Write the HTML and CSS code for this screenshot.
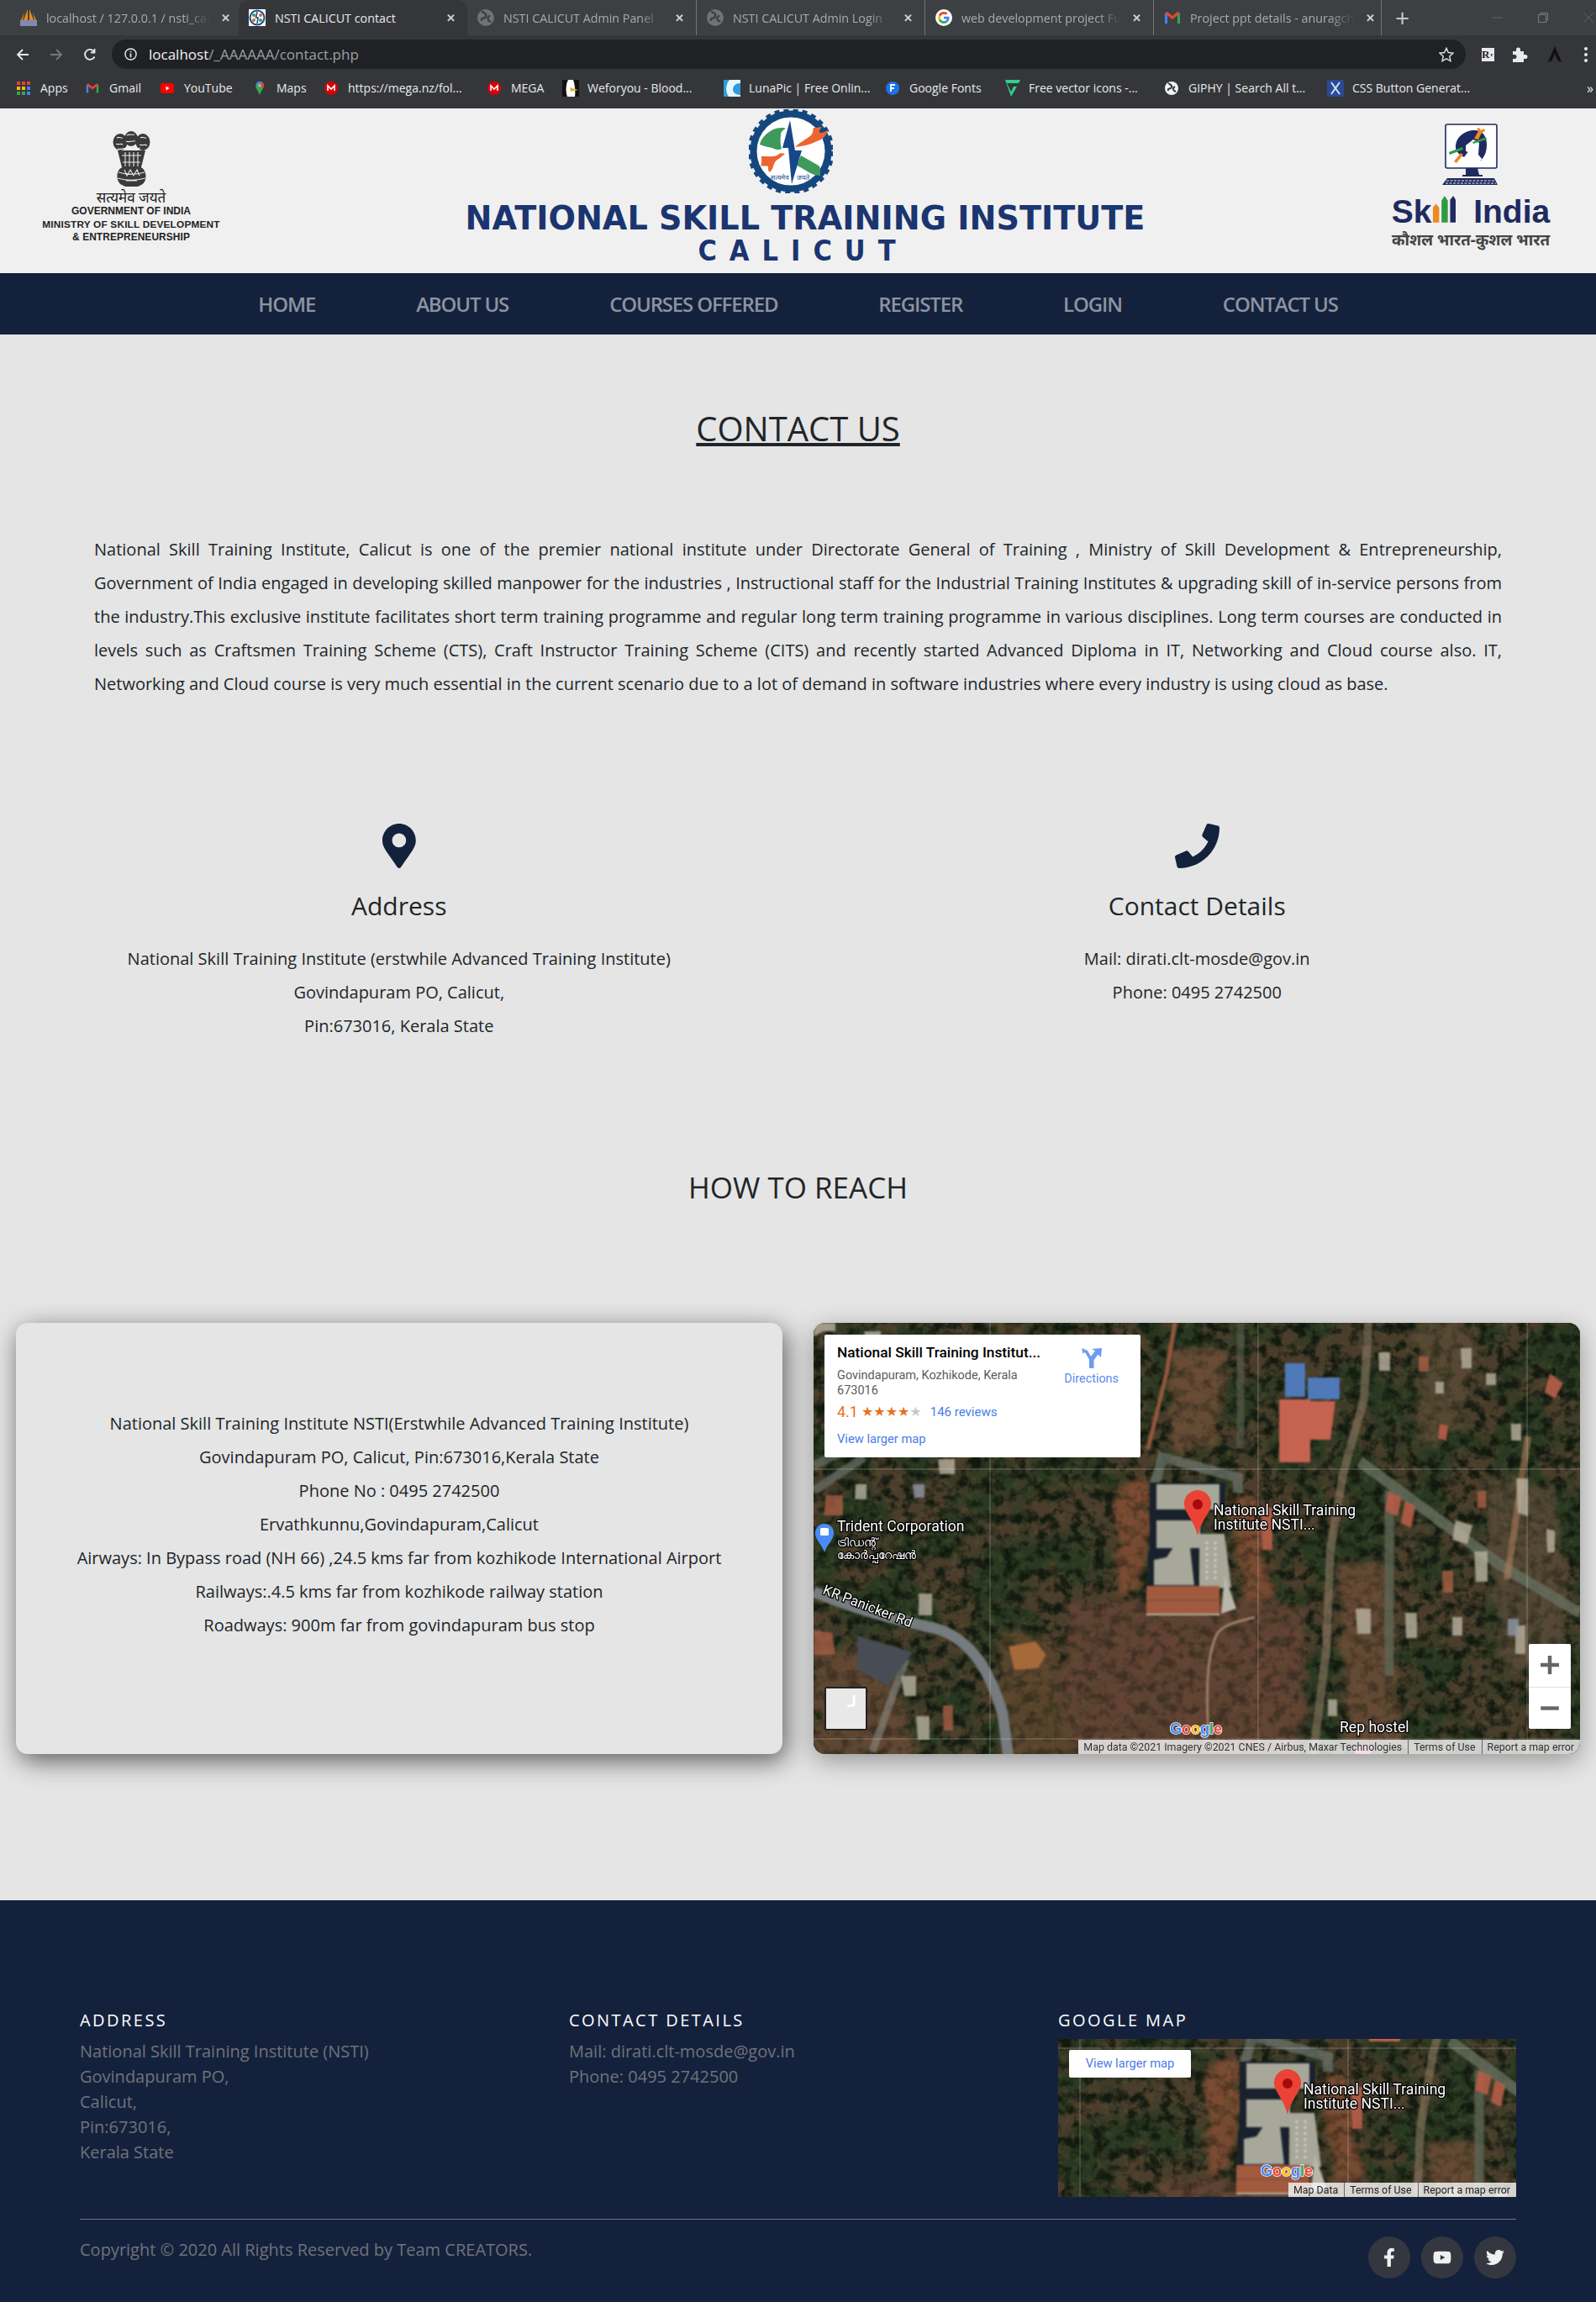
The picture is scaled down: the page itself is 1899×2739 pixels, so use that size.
FILE: index.html
```html
<!DOCTYPE html>
<html lang="en">
<head>
<meta charset="utf-8">
<title>NSTI CALICUT contact</title>
<link rel="stylesheet" href="styles.css">
</head>
<body>
<div class="browser">
  <div class="tabstrip">
    <div class="tab tab-first">
      <svg class="fav" viewBox="0 0 20 20"><path d="M9 0 4 13h5zM11 0l5 13h-5zM5 4 1 13h2zM15 4l4 9h-2z" fill="#e98a1c"/><rect x="0" y="13" width="20" height="7" fill="#7f8ab0"/></svg>
      <span class="tab-title">localhost / 127.0.0.1 / nsti_cal</span><span class="tab-x">✕</span>
    </div>
    <div class="tab tab-active">
      <svg class="fav" viewBox="0 0 20 20"><rect width="20" height="20" fill="#fff"/><circle cx="10" cy="10" r="8.500" fill="none" stroke="#1b4d86" stroke-width="2"/><path d="M10 3 8.500 10h2.500L10 17" stroke="#1b4d86" fill="none" stroke-width="1.600"/><circle cx="6" cy="7" r="2" fill="#3c9a57"/><circle cx="14" cy="7" r="2" fill="#e8632f"/><circle cx="6" cy="13" r="2" fill="#e8632f"/><circle cx="14" cy="13" r="2" fill="#3c9a57"/></svg>
      <span class="tab-title">NSTI CALICUT contact</span><span class="tab-x">✕</span>
    </div>
    <div class="tab">
      <svg class="fav" viewBox="0 0 16 16"><circle cx="8" cy="8" r="8" fill="#6f7276"/><path d="M4 2c3 2 5 2 4 5S3 7 4 11M12 6c-2 1-3 3-1 5l2 1" stroke="#3c4043" stroke-width="2" fill="none"/></svg>
      <span class="tab-title">NSTI CALICUT Admin Panel</span><span class="tab-x">✕</span>
    </div>
    <div class="tab tab-sep">
      <svg class="fav" viewBox="0 0 16 16"><circle cx="8" cy="8" r="8" fill="#6f7276"/><path d="M4 2c3 2 5 2 4 5S3 7 4 11M12 6c-2 1-3 3-1 5l2 1" stroke="#3c4043" stroke-width="2" fill="none"/></svg>
      <span class="tab-title">NSTI CALICUT Admin Login</span><span class="tab-x">✕</span>
    </div>
    <div class="tab tab-sep">
      <svg class="fav" viewBox="0 0 20 20"><circle cx="10" cy="10" r="10" fill="#fff"/><path d="M16.500 10.200c0-.5 0-1-.1-1.400H10v2.700h3.700c-.2.9-.7 1.600-1.400 2l2.200 1.700c1.300-1.200 2-3 2-5z" fill="#4285f4"/><path d="M10 17c1.900 0 3.400-.6 4.500-1.700l-2.200-1.700c-.6.4-1.400.7-2.300.7-1.800 0-3.300-1.200-3.800-2.800L3.900 13.200C5 15.500 7.300 17 10 17z" fill="#34a853"/><path d="M6.200 11.500a4 4 0 0 1 0-2.900L3.900 6.800a7 7 0 0 0 0 6.400z" fill="#fbbc05"/><path d="M10 5.800c1 0 1.900.3 2.600 1l2-2C13.400 3.700 11.800 3 10 3 7.300 3 5 4.500 3.900 6.800l2.300 1.800C6.700 7 8.200 5.800 10 5.800z" fill="#ea4335"/></svg>
      <span class="tab-title">web development project Fu</span><span class="tab-x">✕</span>
    </div>
    <div class="tab tab-sep tab-end">
      <svg class="fav" viewBox="0 0 20 16"><path d="M1 15V3l3-2v14z" fill="#4285f4"/><path d="M19 15V3l-3-2v14z" fill="#34a853"/><path d="M1 3l3-2 6 5 6-5 3 2-9 7z" fill="#ea4335"/></svg>
      <span class="tab-title">Project ppt details - anuragch</span><span class="tab-x">✕</span>
    </div>
    <span class="tab-plus">+</span>
    <div class="winctl">
      <svg viewBox="0 0 12 12"><path d="M0 6h12" stroke="#5f6368"/></svg>
      <svg viewBox="0 0 12 12"><path d="M.5 2.500h9v9h-9zM3 2.500V.5h8.500V9H9.500" fill="none" stroke="#7a7d81"/></svg>
      <svg viewBox="0 0 12 12"><path d="M0 0l12 12M12 0L0 12" stroke="#5f6368"/></svg>
    </div>
  </div>
  <div class="toolbar">
    <svg class="tool" viewBox="0 0 16 16"><path d="M15 8H2M8 2 2 8l6 6" fill="none" stroke="#e8eaed" stroke-width="1.800"/></svg>
    <svg class="tool" viewBox="0 0 16 16"><path d="M1 8h13M8 2l6 6-6 6" fill="none" stroke="#75787c" stroke-width="1.800"/></svg>
    <svg class="tool" viewBox="0 0 16 16"><path d="M13.500 10.500A6 6 0 1 1 13 4.500M13.500 1v4.500H9" fill="none" stroke="#e8eaed" stroke-width="1.800"/></svg>
    <div class="urlbar">
      <svg class="url-info" viewBox="0 0 16 16"><circle cx="8" cy="8" r="7" fill="none" stroke="#e8eaed" stroke-width="1.500"/><path d="M8 7v5M8 4v1.600" stroke="#e8eaed" stroke-width="1.800"/></svg>
      <span class="url-text"><span class="url-host">localhost</span>/_AAAAAA/contact.php</span>
      <svg class="url-star" viewBox="0 0 20 20"><path d="M10 1.500 12.600 7.300l6.300.7-4.700 4.200 1.300 6.200L10 15.300l-5.500 3.100 1.300-6.200L1.100 8l6.300-.7z" fill="none" stroke="#dadce0" stroke-width="1.600"/></svg>
    </div>
    <div class="ext">
      <span class="ext-r"><span class="ext-rbig">R</span><span class="ext-rsmall">r</span></span>
      <svg class="ext-i ext-puzzle" viewBox="0 0 20 20"><path d="M2 6h4V4a2.500 2.500 0 0 1 5 0v2h4v4h2a2.500 2.500 0 0 1 0 5h-2v4H2v-4h2a2.500 2.500 0 0 0 0-5H2z" fill="#e8eaed"/></svg>
      <svg class="ext-i ext-a" viewBox="0 0 20 22"><path d="M10 0 19 21l-5-2-4-9-4 9-5 2z" fill="#111"/></svg>
      <svg class="ext-dots" viewBox="0 0 4 18"><circle cx="2" cy="2" r="2" fill="#e8eaed"/><circle cx="2" cy="9" r="2" fill="#e8eaed"/><circle cx="2" cy="16" r="2" fill="#e8eaed"/></svg>
    </div>
  </div>
  <div class="bookmarks">
    <div class="bm"><svg class="bm-i" viewBox="0 0 16 16"><g fill="#ea4335"><rect width="4" height="4"/><rect x="6" width="4" height="4"/><rect x="12" width="4" height="4"/></g><g fill="#fbbc05"><rect y="6" width="4" height="4"/><rect x="6" y="6" width="4" height="4"/></g><rect x="12" y="6" width="4" height="4" fill="#4285f4"/><g fill="#34a853"><rect y="12" width="4" height="4"/><rect x="6" y="12" width="4" height="4"/></g><rect x="12" y="12" width="4" height="4" fill="#4285f4"/></svg>Apps</div>
    <div class="bm"><svg class="bm-i" viewBox="0 0 20 16"><path d="M1 15V3l3-2v14z" fill="#4285f4"/><path d="M19 15V3l-3-2v14z" fill="#34a853"/><path d="M1 3l3-2 6 5 6-5 3 2-9 7z" fill="#ea4335"/></svg>Gmail</div>
    <div class="bm"><svg class="bm-i" viewBox="0 0 16 16"><rect y="2" width="16" height="12" rx="3" fill="#f00"/><path d="M6.500 5.500v5l4-2.500z" fill="#fff"/></svg>YouTube</div>
    <div class="bm"><svg class="bm-i" viewBox="0 0 12 20"><path d="M6 20C4 14 0 11 0 6a6 6 0 0 1 12 0c0 5-4 8-6 14z" fill="#34a853"/><path d="M1 3a6 6 0 0 1 9-2L3 9z" fill="#4285f4"/><path d="M10 1a6 6 0 0 1 1 8L6 6z" fill="#ea4335"/><circle cx="6" cy="6" r="2.200" fill="#fbbc05"/></svg>Maps</div>
    <div class="bm"><svg class="bm-i" viewBox="0 0 16 16"><circle cx="8" cy="8" r="8" fill="#d90007"/><path d="M4 11V5l4 4 4-4v6" stroke="#fff" stroke-width="1.600" fill="none"/></svg>https://mega.nz/fol...</div>
    <div class="bm"><svg class="bm-i" viewBox="0 0 16 16"><circle cx="8" cy="8" r="8" fill="#d90007"/><path d="M4 11V5l4 4 4-4v6" stroke="#fff" stroke-width="1.600" fill="none"/></svg>MEGA</div>
    <div class="bm"><svg class="bm-i bm-wide" viewBox="0 0 20 20"><rect width="20" height="20" fill="#fff"/><path d="M0 0h7c-3 6-3 14-1 20H0zM13 0h7v20h-5c1-5 0-15-2-20z" fill="#111"/><path d="M9 9l10 3-9 2z" fill="#e0b040"/></svg>Weforyou - Blood...</div>
    <div class="bm"><svg class="bm-i bm-wide" viewBox="0 0 20 20"><rect width="20" height="20" fill="#2d9cdb"/><path d="M7 0h13v4c-6 0-9 3-9 8 0 3 4 6 9 6v2H6c-4-6-4-14 1-20z" fill="#e8f6fc"/></svg>LunaPic | Free Onlin...</div>
    <div class="bm"><svg class="bm-i" viewBox="0 0 16 16"><circle cx="8" cy="8" r="8" fill="#1a73e8"/><path d="M6 12V4h5M6 8h4" stroke="#fff" stroke-width="1.800" fill="none"/></svg>Google Fonts</div>
    <div class="bm"><svg class="bm-i bm-wide" viewBox="0 0 20 20"><path d="M2 0h18l-2 4H4l5 10 3-6h4l-7 12z" fill="#2fd08a"/></svg>Free vector icons -...</div>
    <div class="bm"><svg class="bm-i" viewBox="0 0 16 16"><circle cx="8" cy="8" r="8" fill="#f1f3f4"/><path d="M4 2c3 2 5 2 4 5S3 7 4 11M12 6c-2 1-3 3-1 5l2 1" stroke="#35363a" stroke-width="2" fill="none"/></svg>GIPHY | Search All t...</div>
    <div class="bm"><svg class="bm-i bm-wide" viewBox="0 0 20 20"><rect width="20" height="20" rx="3" fill="#2a4a94"/><path d="M5 3l10 14M15 3 5 17" stroke="#cfe0ff" stroke-width="2"/></svg>CSS Button Generat...</div>
    <div class="bm bm-more">»</div>
  </div>
</div>

<header class="site-header">
  <div class="gov">
    <svg class="emblem" viewBox="0 0 45 68">
      <g fill="#3a3a3a">
        <ellipse cx="22" cy="10" rx="8" ry="9"/><ellipse cx="9" cy="14" rx="8.500" ry="10"/><ellipse cx="36" cy="14" rx="8.500" ry="10"/>
        <path d="M6 24h33l-5 20H11z"/>
        <path d="M12 44h21c8 2 9 18 1 21l-4 2H15l-4-2c-8-4-7-19 1-21z"/>
      </g>
      <g fill="none" stroke="#e9e9e9" stroke-width="1.100">
        <path d="M5 9c3-2 5 1 7 0M4 16c3 2 6-1 8 1M17 6c3-2 6 0 9-1M16 13c4 2 7-1 11 0M33 9c3-2 5 1 7 0M32 17c3 2 6-1 9 1M6 22c4 2 6-2 10 0M21 22c4-2 7 1 12-1"/>
        <path d="M15 26v17M20 26v17M25 26v17M30 26v17M11 30h23M12 38h21"/>
        <path d="M7 50c10 3 21 3 31 0M6 57c10 3 22 3 33 0M14 47l3 7 4-7 4 7 4-7 3 7M16 60h13"/>
      </g>
    </svg>
    <div class="gov-hi">सत्यमेव जयते</div>
    <div class="gov-l1">GOVERNMENT OF INDIA</div>
    <div class="gov-l2">MINISTRY OF SKILL DEVELOPMENT</div>
    <div class="gov-l3">&amp; ENTREPRENEURSHIP</div>
  </div>
  <div class="inst">
    <svg class="inst-logo" viewBox="0 0 100 100">
      <circle cx="50" cy="50" r="44.500" fill="#fff" stroke="#15477f" stroke-width="8"/>
      <circle cx="50" cy="50" r="49" fill="none" stroke="#15477f" stroke-width="5" stroke-dasharray="6 5.100"/>
      <path d="M13 42c2-9 9-14 16-18 5-2 12-3 15-1-4 2-6 4-6 8-1 8 0 12 1 16-3 2-8 1-11-1-5-1-10-2-15-4z" fill="#3d9a5b"/>
      <path d="M55 45c6-6 13-9 19-14 3-3 2-7 3-9 3 0 3 0 10-1-2 3-4 5-3 7 4 0 7-1 10-4-1 6-5 12-13 14-8 4-17 6-26 7z" fill="#ec6531"/>
      <path d="M15 56c9 0 17 1 20-2 2-2 4-2 8-1-3 2-5 5-9 7-5 3-4 9-8 14-3 1-3-2-3-6-3-1-6 0-9-1 2-3 1-6 1-11z" fill="#ec6531"/>
      <path d="M62 55l21 12c2 1 2 4 2 12-5 0-13-3-17-6-5-3-8-5-11-6 2-4 3-8 5-12z" fill="#3d9a5b"/>
      <path d="M49 13 40 46h7l4 43 12-40h-8z" fill="#17498a"/>
      <text x="26" y="84" class="inst-logo-t">सत्यमेव</text><text x="57" y="84" class="inst-logo-t">जयते</text>
    </svg>
    <div class="inst-name">NATIONAL SKILL TRAINING INSTITUTE</div>
    <div class="inst-city">CALICUT</div>
  </div>
  <div class="skill">
    <svg class="skill-mon" viewBox="0 0 68 74">
      <rect x="4" y="1" width="61" height="52" rx="2" fill="#fff" stroke="#1f2a60" stroke-width="1.600"/>
      <path d="M16 28C16 14 30 7 40 8c9 1 13 8 13 17 0 9-3 15-7 19-4-3-8-8-14-12l-6 8c-6-3-10-7-10-12z" fill="#1f2a60"/>
      <path d="M28 26l9-7 7 4-1 14 5 6-6 1-7-9-7-2z" fill="#fff"/>
      <path d="M8 34l16-6 1 3-16 6zM36 22l16-6 1 3-16 5z" fill="#2e9a46"/>
      <path d="M14 45l8-10 3 2-8 10zM38 18l5-9-2-3 3-1 2 3 4-2 1 3-4 2-4 8z" fill="#ee8a24"/>
      <path d="M28 53h14l2 8h4v2H24v-2h4z" fill="#1f2a60"/>
      <path d="M6 65h56l4 8H0z" fill="#1f2a60"/>
      <path d="M5 68h58M4 71h60" stroke="#f0f0f0" stroke-dasharray="3 1.500"/>
    </svg>
    <div class="skill-word">Sk<svg class="skill-ill" viewBox="0 0 30 36"><path d="M1 36V17l4-5 4 5v19z" fill="#ee8a24"/><path d="M12 36V8l4-6 4 6v28z" fill="#2e9a46"/><path d="M23 36V7l4-5 3 5v29z" fill="#1f2a60"/></svg>  India</div>
    <div class="skill-hi">कौशल भारत-कुशल भारत</div>
  </div>
</header>

<nav class="mainnav">
  <a>HOME</a><a>ABOUT US</a><a>COURSES OFFERED</a><a>REGISTER</a><a>LOGIN</a><a>CONTACT US</a>
</nav>

<main class="page">
  <h1 class="page-title">CONTACT US</h1>
  <p class="intro">National Skill Training Institute, Calicut is one of the premier national institute under Directorate General of Training , Ministry of Skill Development &amp; Entrepreneurship, Government of India engaged in developing skilled manpower for the industries , Instructional staff for the Industrial Training Institutes &amp; upgrading skill of in-service persons from the industry.This exclusive institute facilitates short term training programme and regular long term training programme in various disciplines. Long term courses are conducted in levels such as Craftsmen Training Scheme (CTS), Craft Instructor Training Scheme (CITS) and recently started Advanced Diploma in IT, Networking and Cloud course also. IT, Networking and Cloud course is very much essential in the current scenario due to a lot of demand in software industries where every industry is using cloud as base.</p>

  <section class="contact-cols">
    <div class="contact-col">
      <svg class="contact-icon" viewBox="0 0 384 512"><path d="M172.268 501.67C26.97 291.031 0 261.628 0 192 0 85.961 85.961 0 192 0s192 85.961 192 192c0 69.628-26.97 99.031-172.268 309.67-9.535 13.774-29.93 13.773-39.464 0zM192 272c44.183 0 80-35.817 80-80s-35.817-80-80-80-80 35.817-80 80 35.817 80 80 80z"/></svg>
      <h2 class="contact-h">Address</h2>
      <p class="lines">National Skill Training Institute (erstwhile Advanced Training Institute)<br>Govindapuram PO, Calicut,<br>Pin:673016, Kerala State</p>
    </div>
    <div class="contact-col">
      <svg class="contact-icon" viewBox="0 0 512 512"><path d="M493.4 24.6l-104-24c-11.3-2.6-22.9 3.3-27.5 13.9l-48 112c-4.2 9.8-1.4 21.3 6.9 28l60.6 49.6c-36 76.7-98.9 140.5-177.2 177.2l-49.6-60.6c-6.8-8.3-18.2-11.1-28-6.9l-112 48C3.9 366.5-2 378.1.6 389.4l24 104C27.1 504.2 36.7 512 48 512c256.1 0 464-207.5 464-464 0-11.2-7.7-20.9-18.6-23.4z"/></svg>
      <h2 class="contact-h">Contact Details</h2>
      <p class="lines">Mail: dirati.clt-mosde@gov.in<br>Phone: 0495 2742500</p>
    </div>
  </section>

  <h2 class="reach-title">HOW TO REACH</h2>

  <section class="reach">
    <div class="reach-card">
      <p class="lines">National Skill Training Institute NSTI(Erstwhile Advanced Training Institute)<br>Govindapuram PO, Calicut, Pin:673016,Kerala State<br>Phone No : 0495 2742500<br>Ervathkunnu,Govindapuram,Calicut<br>Airways: In Bypass road (NH 66) ,24.5 kms far from kozhikode International Airport<br>Railways:.4.5 kms far from kozhikode railway station<br>Roadways: 900m far from govindapuram bus stop</p>
    </div>
    <div class="map-big">
      <svg class="map-svg" viewBox="0 0 912 513" preserveAspectRatio="none">
        <defs>
          <filter id="forest" x="0" y="0" width="100%" height="100%" color-interpolation-filters="sRGB">
            <feTurbulence type="fractalNoise" baseFrequency="0.016" numOctaves="5" seed="21"/>
            <feColorMatrix values="0 0 0 0 0.16  0 0 0 0 0.22  0 0 0 0 0.13  0 5 0 0 -2.050"/>
          </filter>
          <filter id="tree" x="0" y="0" width="100%" height="100%" color-interpolation-filters="sRGB">
            <feTurbulence type="fractalNoise" baseFrequency="0.075" numOctaves="3" seed="3"/>
            <feColorMatrix values="0 0 0 0 0.07  0 0 0 0 0.10  0 0 0 0 0.06  0 3.200 0 0 -1.400"/>
          </filter>
          <filter id="speck" x="0" y="0" width="100%" height="100%" color-interpolation-filters="sRGB">
            <feTurbulence type="fractalNoise" baseFrequency="0.11" numOctaves="2" seed="9"/>
            <feColorMatrix values="0 0 0 0 0.36  0 0 0 0 0.38  0 0 0 0 0.22  3.200 0 0 0 -1.650"/>
          </filter>
          <filter id="rough" x="-5%" y="-5%" width="110%" height="110%" color-interpolation-filters="sRGB">
            <feTurbulence type="fractalNoise" baseFrequency="0.035" numOctaves="4" seed="11" result="n"/>
            <feDisplacementMap in="SourceGraphic" in2="n" scale="34"/>
            <feGaussianBlur stdDeviation="3.500"/>
          </filter>
          <filter id="soft" color-interpolation-filters="sRGB"><feGaussianBlur stdDeviation="1.100"/></filter>
        </defs>
        <g id="sat">
          <rect x="-200" y="-200" width="1300" height="900" fill="#4a3d2b"/>
          <rect x="-200" y="-200" width="1300" height="900" filter="url(#forest)"/>
          <rect x="-200" y="-200" width="1300" height="900" filter="url(#tree)"/>
          <g filter="url(#rough)" opacity=".8">
            <path d="M300 335h290l-10 190H290z" fill="#6a4536"/>
            <path d="M360 195h42l-8 130h-34zM492 205h34l22 130h-34z" fill="#8a4f35"/>
            <path d="M425 30h70l-20 120h-50z" fill="#74503a"/>
            <path d="M625 285h60l10 220h-60z" fill="#714e39"/>
            <path d="M0 395h85l40 120H0z" fill="#6b4a36"/>
            <path d="M222 365l60 10 30 150h-90z" fill="#62472f"/>
            <path d="M210 0h50l-20 50-40 15z" fill="#5f4830"/>
            <path d="M720 0h70l-10 110-60 50z" fill="#5c4c36"/>
            <path d="M800 190h80l20 220h-80z" fill="#5b4b39"/>
          </g>
          <rect x="-200" y="-200" width="1300" height="900" filter="url(#tree)" opacity=".35"/>
          <rect x="-200" y="-200" width="1300" height="900" filter="url(#speck)" opacity=".3"/>
          <g filter="url(#soft)">
            <path d="M430 0l-10 60-22 90" fill="none" stroke="#94573c" stroke-width="5"/>
            <path d="M660 0l-5 90-25 90-15 90-5 120-16 130" fill="none" stroke="#8d7a63" stroke-width="10" opacity=".6"/>
            <path d="M508 0v150" fill="none" stroke="#5f6052" stroke-width="9" opacity=".6"/>
            <path d="M405 196l10-36 90 24v18" fill="none" stroke="#6f766f" stroke-width="12" opacity=".7"/>
            <path d="M650 165 820 290l92 55" fill="none" stroke="#68705f" stroke-width="13" opacity=".8"/>
            <path d="M685 200v220" fill="none" stroke="#5e6858" stroke-width="11" opacity=".75"/>
            <path d="M850 135l-25 170" fill="none" stroke="#b07e5c" stroke-width="8" opacity=".6"/>
            <path d="M0 200 60 160M0 170l50-25" fill="none" stroke="#6b6f68" stroke-width="10" opacity=".7"/>
            <path d="M0 320C60 345 110 355 150 365c40 15 60 50 75 100l8 60" fill="none" stroke="#767b7d" stroke-width="13"/>
            <path d="M110 400 70 510" fill="none" stroke="#8a8a86" stroke-width="9" opacity=".6"/>
            <path d="M470 490c-4-60 0-100 10-120 8-12 25-14 45-20" fill="none" stroke="#a08068" stroke-width="3"/>
            <path d="M52 372l66 20-30 40-36-20z" fill="#484d55"/>
            <path d="M232 385l32-6 13 16-10 16-28 2z" fill="#a5693a"/>
            <g fill="#c66350"><path d="M554 91h37v75h-37z"/><path d="M591 93h30l-6 46h-24z"/></g>
            <g fill="#4f79b8"><path d="M561 48h24v40h-24z"/><path d="M588 65h38v26h-38z"/></g>
            <path d="M400 190h90v35h-90zM400 225h62v50h-62zM398 272h60v48h-60z" fill="#19212c"/>
            <path d="M408 192h75v30h-75zM408 235h52v33h-52zM405 282l15-3 8-12h20l5 45h-48zM459 251h30l8 64-38 2z" fill="#a7a89a"/>
            <path d="M478 260v48M468 260v48" stroke="#d4d3c8" stroke-dasharray="3 4" stroke-width="2.500"/>
            <path d="M396 313h87v34h-87z" fill="#a25a3e"/>
            <path d="M396 330h87" stroke="#6f4a3a"/><path d="M396 347h87" stroke="#b8b2a2" stroke-width="2"/>
            <path d="M489 300l14 40-18 6z" fill="#b9b7aa"/>
            <g fill="#b75f49" opacity=".9"><path d="M684 200l16 8-5 22-15-6z"/><path d="M704 212l12 6-5 26-12-6z"/><path d="M532 220h14v50h-12z"/><path d="M876 60l16 12-10 18-12-8z"/><path d="M745 120l10 2-2 18-10-2z"/></g>
            <g fill="#b9b2a0" opacity=".8"><path d="M770 30h13v24h-12z"/><path d="M672 35h14v22h-13z"/><path d="M148 162h20v18h-18z"/><path d="M50 192h13v18H49z"/><path d="M836 185h14v45l-12-4z"/><path d="M764 235l20 6-6 22-18-5z"/><path d="M786 272h16v36h-14z"/><path d="M704 345h14v30h-13z"/><path d="M645 340h18v30h-16z"/><path d="M125 322h16v26h-16z"/><path d="M122 468h16v28h-14z"/><path d="M104 420h18v24h-14z"/><path d="M612 448h11v20h-11z"/><path d="M872 245l10 2v26h-9z"/><path d="M835 360h12v34h-12z"/><path d="M0 0h26v10H12l-12 6zM60 10h20v10H62z"/><path d="M800 60h12v14h-12z"/><path d="M830 120h12v20h-12z"/><path d="M740 70h10v14h-10z"/><path d="M760 350h12v22h-12z"/></g>
            <g fill="#a85f45" opacity=".8"><path d="M15 205h20v24H12z"/><path d="M748 295h13v26h-12z"/><path d="M0 365l22 4 4 26H0z"/><path d="M154 455h12v30h-11z"/><path d="M790 200h10v20h-10z"/><path d="M720 40h12v18h-12z"/></g>
            <g fill="#8d96a8" opacity=".8"><path d="M118 192h14v16h-12z"/><path d="M826 352h13v20h-13z"/></g>
          </g>
          <g class="gridlines"><path d="M210 0v513M529 0v513M849 0v513M0 174h912M0 495h912"/></g>
          <circle cx="654" cy="512" r="10" fill="#ec6a9e"/>
          <path d="M457 253c-5-20-16-27-16-38a16 16 0 0 1 32 0c0 11-11 18-16 38z" fill="#ea4335"/>
          <circle cx="457" cy="216" r="6" fill="#a60a0a"/>
          <text x="476" y="229" class="lbl">National Skill Training</text>
          <text x="476" y="246" class="lbl">Institute NSTI...</text>
          <text x="626" y="487" class="lbl">Rep hostel</text>
        </g>
        <path d="M13 273c-3-9-11-15-11-23a11 11 0 0 1 22 0c0 8-8 14-11 23z" fill="#4c8bf5"/>
        <rect x="8" y="244" width="10" height="9" rx="1.500" fill="#fff"/>
        <text x="28" y="248" class="lbl">Trident Corporation</text>
        <text x="28" y="266" class="lbl lbl-ml">ട്രിഡന്റ്</text>
        <text x="28" y="281" class="lbl lbl-ml">കോർപ്പറേഷൻ</text>
        <text x="0" y="0" class="lbl lbl-road" transform="translate(10 322) rotate(21)">KR Panicker Rd</text>
        <text x="424" y="489" class="g-logo"><tspan class="g-b">G</tspan><tspan class="g-r">o</tspan><tspan class="g-y">o</tspan><tspan class="g-b">g</tspan><tspan class="g-g">l</tspan><tspan class="g-r">e</tspan></text>
      </svg>
      <div class="map-info">
        <div class="mi-main">
          <div class="mi-title">National Skill Training Institut...</div>
          <div class="mi-addr">Govindapuram, Kozhikode, Kerala 673016</div>
          <div class="mi-rate"><span class="mi-score">4.1</span><span class="mi-stars">★★★★<span class="mi-star-off">★</span></span><span class="mi-rev">146 reviews</span></div>
          <div class="mi-link">View larger map</div>
        </div>
        <div class="mi-dir">
          <svg class="mi-dir-i" viewBox="0 0 24 24"><path d="M0 0 7 3 11 10 16 3.500 12 1l12-1-1 11-3.500-3.500-5 7V24H9V13.500L4 5 1.500 6.500z" fill="#6f9cf2"/></svg>
          <span>Directions</span>
        </div>
      </div>
      <div class="pegman"><svg viewBox="0 0 48 50"><path d="M34 8v12c-2 2-5 1-8 2" fill="none" stroke="#fff" stroke-width="3"/></svg></div>
      <div class="zoomctl"><svg viewBox="0 0 50 50"><path d="M25 14v22M14 25h22" stroke="#666" stroke-width="4.500"/></svg><svg viewBox="0 0 50 50"><path d="M14 25h22" stroke="#666" stroke-width="4.500"/></svg></div>
      <div class="attrib"><span>Map data ©2021 Imagery ©2021 CNES / Airbus, Maxar Technologies</span><span>Terms of Use</span><span>Report a map error</span></div>
    </div>
  </section>
</main>

<footer class="footer">
  <div class="foot-cols">
    <div class="foot-col">
      <h3 class="foot-h">ADDRESS</h3>
      <p class="foot-t">National Skill Training Institute (NSTI)<br>Govindapuram PO,<br>Calicut,<br>Pin:673016,<br>Kerala State</p>
    </div>
    <div class="foot-col">
      <h3 class="foot-h">CONTACT DETAILS</h3>
      <p class="foot-t">Mail: dirati.clt-mosde@gov.in<br>Phone: 0495 2742500</p>
    </div>
    <div class="foot-col foot-col-map">
      <h3 class="foot-h">GOOGLE MAP</h3>
      <div class="map-small">
        <svg class="map-svg" viewBox="0 0 545 188" preserveAspectRatio="none">
          <use href="#sat" x="-184" y="-163"/>
          <text x="241" y="163" class="g-logo"><tspan class="g-b">G</tspan><tspan class="g-r">o</tspan><tspan class="g-y">o</tspan><tspan class="g-b">g</tspan><tspan class="g-g">l</tspan><tspan class="g-r">e</tspan></text>
        </svg>
        <div class="small-link">View larger map</div>
        <div class="attrib attrib-small"><span>Map Data</span><span>Terms of Use</span><span>Report a map error</span></div>
      </div>
    </div>
  </div>
  <div class="foot-bottom">
    <p class="foot-t">Copyright © 2020 All Rights Reserved by Team CREATORS.</p>
    <div class="social">
      <a class="soc"><svg viewBox="0 0 320 512"><path d="M279.14 288l14.22-92.66h-88.91v-60.13c0-25.35 12.42-50.06 52.24-50.06h40.42V6.26S260.43 0 225.36 0c-73.22 0-121.08 44.38-121.08 124.72v70.62H22.89V288h81.39v224h100.17V288z"/></svg></a>
      <a class="soc"><svg viewBox="0 0 576 512"><path d="M549.655 124.083c-6.281-23.65-24.787-42.276-48.284-48.597C458.781 64 288 64 288 64S117.22 64 74.629 75.486c-23.497 6.322-42.003 24.947-48.284 48.597-11.412 42.867-11.412 132.305-11.412 132.305s0 89.438 11.412 132.305c6.281 23.65 24.787 41.5 48.284 47.821C117.22 448 288 448 288 448s170.78 0 213.371-11.486c23.497-6.321 42.003-24.171 48.284-47.821 11.412-42.867 11.412-132.305 11.412-132.305s0-89.438-11.412-132.305zm-317.51 213.508V175.185l142.739 81.205-142.739 81.201z"/></svg></a>
      <a class="soc"><svg viewBox="0 0 512 512"><path d="M459.37 151.716c.325 4.548.325 9.097.325 13.645 0 138.72-105.583 298.558-298.558 298.558-59.452 0-114.68-17.219-161.137-47.106 8.447.974 16.568 1.299 25.34 1.299 49.055 0 94.213-16.568 130.274-44.832-46.132-.975-84.792-31.188-98.112-72.772 6.498.974 12.995 1.624 19.818 1.624 9.421 0 18.843-1.3 27.614-3.573-48.081-9.747-84.143-51.98-84.143-102.985v-1.299c13.969 7.797 30.214 12.67 47.431 13.319-28.264-18.843-46.781-51.005-46.781-87.391 0-19.492 5.197-37.36 14.294-52.954 51.655 63.675 129.3 105.258 216.365 109.807-1.624-7.797-2.599-15.918-2.599-24.04 0-57.828 46.782-104.934 104.934-104.934 30.213 0 57.502 12.67 76.67 33.137 23.715-4.548 46.456-13.32 66.599-25.34-7.798 24.366-24.366 44.833-46.132 57.827 21.117-2.273 41.584-8.122 60.426-16.243-14.292 20.791-32.161 39.308-52.628 54.253z"/></svg></a>
    </div>
  </div>
</footer>
</body>
</html>
```

FILE: styles.css
```css
* { box-sizing: border-box; }
html, body { margin: 0; padding: 0; }
body { width: 1899px; font-family: "Open Sans", "Noto Sans", sans-serif; background: #e5e5e5; color: #212529; }
p, h1, h2, h3 { margin: 0; font-weight: 400; }

/* browser chrome */
.browser { background: #35363a; height: 129px; }
.tabstrip { height: 42px; background: #3c4043; display: flex; padding-left: 12px; align-items: stretch; }
.tab { width: 272px; display: grid; grid-template-columns: 20px 1fr 16px; column-gap: 11px; align-items: center; padding: 0 12px; color: #a8abaf; font-size: 14.300px; }
.tab-first { padding-right: 16px; }
.tab-active { background: #35363a; color: #e8eaed; border-radius: 12px 12px 0 0; }
.tab-sep { border-left: 1px solid #70757a; background-clip: content-box; }
.tab-end { border-right: 1px solid #70757a; }
.fav { width: 20px; height: 20px; }
.tab-title { white-space: nowrap; -webkit-mask-image: linear-gradient(90deg, #000 85%, transparent 100%); mask-image: linear-gradient(90deg, #000 85%, transparent 100%); }
.tab-active .tab-title { -webkit-mask-image: none; mask-image: none; }
.tab-x { font-size: 13px; font-weight: 700; text-align: center; color: #d0d2d5; }
.tab-plus { color: #c4c7ca; font-size: 30px; line-height: 42px; margin-left: 16px; font-weight: 400; }
.winctl { margin-left: auto; display: flex; align-items: center; gap: 42px; }
.winctl svg { width: 12px; height: 12px; }
.winctl svg:last-child { margin-right: 3px; }

.toolbar { height: 42px; display: flex; align-items: flex-start; padding-top: 5px; padding-left: 19px; }
.tool { width: 16px; height: 16px; margin-top: 10px; margin-right: 24px; }
.urlbar { margin-left: -6px; width: 1611px; height: 35px; background: #202124; border-radius: 18px; display: flex; align-items: center; padding: 0 14px 0 15px; }
.url-info { width: 15px; height: 15px; }
.url-text { margin-left: 14px; color: #9aa0a6; font-size: 17px; }
.url-host { color: #f1f3f4; }
.url-star { width: 18px; height: 18px; margin-left: auto; }
.ext { display: flex; align-items: center; height: 35px; margin-left: 19px; }
.ext-r { background: #e8eaed; color: #222; width: 15px; height: 16px; font-family: "Liberation Serif", serif; font-size: 13px; line-height: 16px; display: flex; font-weight: 700; }
.ext-rbig { display: block; }
.ext-rsmall { font-size: 7px; color: #222; margin-left: 1px; }
.ext-i { width: 20px; height: 20px; }
.ext-puzzle { margin-left: 20px; }
.ext-a { margin-left: 22px; }
.ext-dots { width: 4px; height: 18px; margin-left: 25px; }

.bookmarks { height: 41px; display: grid; grid-template-columns: 82px 89px 110px 85px 194px 89px 192px 193px 140px 192px 193px 309px auto; padding-left: 20px; align-items: center; color: #e8eaed; font-size: 14px; }
.bm { display: flex; align-items: center; white-space: nowrap; }
.bm-i { width: 16px; height: 16px; margin-right: 12px; flex: none; }
.bm-wide { width: 20px; height: 20px; margin-right: 10px; }
.bm-more { font-size: 16px; }

/* site header */
.site-header { height: 196px; background: #f0f0f0; display: flex; justify-content: space-between; }
.gov { width: 224px; margin-left: 44px; padding-top: 26px; display: flex; flex-direction: column; align-items: center; color: #222; font-family: "Liberation Sans", sans-serif; font-weight: 700; }
.emblem { width: 45px; height: 68px; }
.gov-hi { font-size: 17px; line-height: 18px; margin-top: 3px; font-family: "Noto Sans", "DejaVu Sans", sans-serif; font-weight: 400; }
.gov-l1 { font-size: 12px; line-height: 15px; }
.gov-l2 { font-size: 11.800px; line-height: 16px; letter-spacing: .2px; }
.gov-l3 { font-size: 11.900px; line-height: 15px; letter-spacing: .1px; }
.inst { flex: 1; display: flex; flex-direction: column; align-items: center; padding-top: 1px; }
.inst-logo { width: 100px; height: 100px; margin-right: 41px; }
.inst-logo-t { font-size: 8px; fill: #17498a; font-family: "Noto Sans", sans-serif; }
.inst-name { font-family: "DejaVu Sans", sans-serif; font-weight: 700; font-size: 38.200px; line-height: 40px; color: #1a3570; margin-top: 10px; margin-right: 7px; white-space: nowrap; }
.inst-city { font-family: "DejaVu Sans Condensed", "DejaVu Sans", sans-serif; font-weight: 700; font-size: 34px; line-height: 36px; letter-spacing: 15px; color: #1a3570; margin-right: 12px; }
.skill { width: 190px; margin-right: 54px; padding-top: 18px; display: flex; flex-direction: column; align-items: center; }
.skill-mon { width: 68px; height: 74px; }
.skill-word { font-family: "Liberation Sans", sans-serif; font-weight: 700; font-size: 39px; line-height: 42px; color: #1f2a60; white-space: pre; margin-top: 10px; }
.skill-ill { width: 28px; height: 34px; }
.skill-hi { font-size: 18.700px; line-height: 24px; font-weight: 700; color: #444; white-space: nowrap; font-family: "Noto Sans", "DejaVu Sans", sans-serif; }

/* navigation */
.mainnav { height: 73px; background: #14213d; display: flex; justify-content: center; align-items: center; gap: 120px; }
.mainnav a { color: #8d93a0; font-size: 24px; font-weight: 600; letter-spacing: -1.150px; }

/* page */
.page { display: flex; flex-direction: column; padding-bottom: 174px; }
.page-title { align-self: center; font-size: 40px; line-height: 56px; margin-top: 84px; text-decoration: underline; color: #212529; }
.intro { margin: 96px 112px 0; font-size: 20px; line-height: 40px; text-align: justify; }
.contact-cols { display: grid; grid-template-columns: 1fr 1fr; margin-top: 146px; text-align: center; }
.contact-col { display: flex; flex-direction: column; align-items: center; }
.contact-icon { height: 53px; fill: #14213d; }
.contact-h { font-size: 30px; line-height: 42px; margin-top: 24px; }
.lines { font-size: 20px; line-height: 40px; margin-top: 22px; }
.reach-title { text-align: center; font-size: 35px; line-height: 46px; margin-top: 149px; }
.reach { display: grid; grid-template-columns: 1fr 1fr; gap: 37px; padding: 0 19px; margin-top: 138px; }
.reach-card { height: 513px; border-radius: 14px; background: #e5e5e5; box-shadow: 4px 8px 30px rgba(0, 0, 0, .6); display: flex; align-items: flex-start; justify-content: center; text-align: center; padding-top: 78px; }
.map-big { height: 513px; border-radius: 14px; overflow: hidden; position: relative; box-shadow: 0 8px 30px rgba(0, 0, 0, .35); font-family: Roboto, sans-serif; }
.map-svg { width: 100%; height: 100%; display: block; }
.gridlines path { stroke: rgba(255, 255, 255, .28); stroke-width: 1; fill: none; }
.lbl { font-family: Roboto, sans-serif; font-size: 17.600px; fill: #fff; stroke: #000; stroke-width: 2.500px; paint-order: stroke; }
.lbl-ml { font-size: 14px; font-family: "Noto Sans", sans-serif; }
.lbl-road { font-size: 16.600px; }
.g-logo { font-family: "Liberation Sans", sans-serif; font-weight: 700; font-size: 18px; stroke: #fff; stroke-width: 1.500px; paint-order: stroke; }
.g-b { fill: #4285f4; } .g-r { fill: #ea4335; } .g-y { fill: #fbbc05; } .g-g { fill: #34a853; }

.map-info { position: absolute; left: 13px; top: 14px; width: 376px; height: 146px; background: #fff; border-radius: 2px; display: flex; padding: 10px 24px 0 15px; }
.mi-main { flex: 1; }
.mi-title { font-size: 17.300px; font-weight: 500; color: #000; line-height: 22px; white-space: nowrap; }
.mi-addr { font-size: 14.500px; line-height: 18px; color: #5b5b5b; width: 250px; margin-top: 8px; }
.mi-rate { display: flex; align-items: center; font-size: 15px; line-height: 18px; margin-top: 7px; }
.mi-score { color: #e7711b; font-size: 18px; }
.mi-stars { color: #e7711b; margin-left: 4px; font-size: 16px; font-family: "DejaVu Sans", sans-serif; }
.mi-star-off { color: #c8c8c8; }
.mi-rev { color: #4a7de6; margin-left: 10px; }
.mi-link { color: #4a7de6; font-size: 14.700px; line-height: 18px; margin-top: 14px; }
.mi-dir { display: flex; flex-direction: column; align-items: center; color: #5a8bef; font-size: 14.400px; padding-top: 6px; margin-right: 2px; }
.mi-dir-i { width: 24px; height: 24px; margin-bottom: 4px; }
.pegman { position: absolute; left: 13px; top: 433px; width: 51px; height: 52px; background: #e8e8e8; border: 2px solid #222; border-radius: 2px; }
.pegman svg { width: 100%; height: 100%; display: block; }
.zoomctl { position: absolute; right: 11px; top: 382px; width: 50px; height: 101px; background: #fff; border-radius: 2px; display: flex; flex-direction: column; }
.zoomctl svg { width: 50px; height: 50px; flex: none; }
.zoomctl svg + svg { border-top: 1px solid #e0e0e0; margin-top: 1px; }
.attrib { position: absolute; right: 0; bottom: 0; height: 17px; background: rgba(245, 245, 245, .82); display: flex; font-size: 12.400px; line-height: 17px; color: #333; white-space: nowrap; }
.attrib span { padding: 0 7px 0 6px; }
.attrib span + span { border-left: 1px solid #666; }

/* footer */
.footer { background: #14213d; height: 478px; padding: 0 95px; display: flex; flex-direction: column; }
.foot-cols { display: grid; grid-template-columns: 582px 582px 1fr; height: 380px; padding-top: 129px; border-bottom: 1px solid #6d7485; }
.foot-h { font-size: 20px; line-height: 28px; color: #fff; letter-spacing: 2.450px; }
.foot-t { font-size: 20px; line-height: 30px; color: #6f7379; }
.foot-col .foot-t { margin-top: 8px; }
.foot-col-map .foot-h { margin-bottom: 8px; }
.map-small { height: 188px; position: relative; overflow: hidden; font-family: Roboto, sans-serif; }
.small-link { position: absolute; left: 13px; top: 13px; width: 145px; height: 33px; background: #fff; border-radius: 2px; color: #4a7de6; font-size: 14.700px; line-height: 33px; text-align: center; }
.attrib-small { height: 17px; color: #222; font-size: 12.400px; }
.foot-bottom { display: flex; justify-content: space-between; align-items: flex-start; padding-top: 20px; }
.foot-bottom .foot-t { margin-top: 1px; }
.social { display: flex; gap: 13px; }
.soc { width: 50px; height: 50px; border-radius: 50%; background: #343740; display: flex; align-items: center; justify-content: center; }
.soc svg { height: 22px; width: 22px; fill: #f0f0f0; }
```
